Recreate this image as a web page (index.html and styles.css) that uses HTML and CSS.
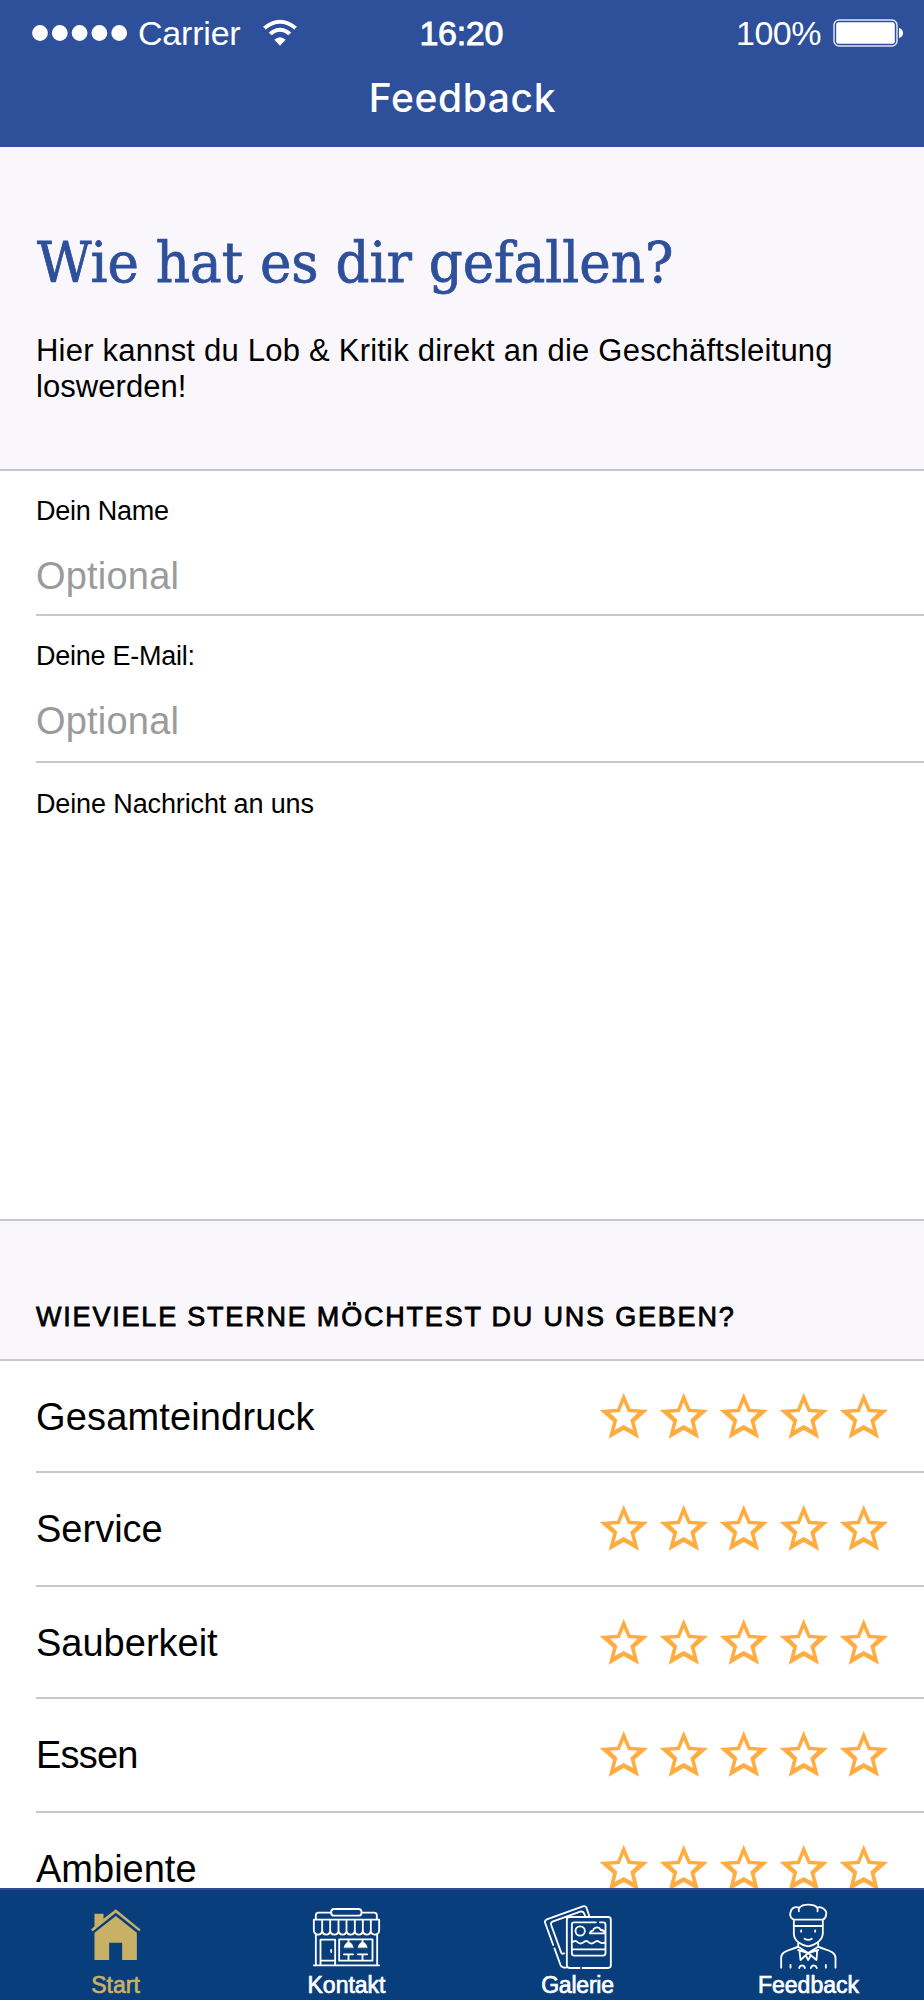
FILE: index.html
```html
<!DOCTYPE html>
<html lang="de">
<head>
<meta charset="utf-8">
<title>Feedback</title>
<link rel="stylesheet" href="styles.css">
</head>
<body>
<svg class="defs" aria-hidden="true">
  <symbol id="star" viewBox="412 578 150 144">
    <path fill-rule="evenodd" d="M486 580 506 628 559 632 519 667 532 718 486 692 441 718 454 667 414 632 467 628ZM486 609 474 638 445 640 467 661 459 692 486 677 514 692 506 661 528 640 499 638Z"/>
  </symbol>
</svg>
<header class="top">
  <div class="status">
    <div class="carrier">
      <svg class="dots" viewBox="0 0 96 16"><circle cx="8" cy="8" r="7.9"/><circle cx="27.8" cy="8" r="7.9"/><circle cx="47.6" cy="8" r="7.9"/><circle cx="67.4" cy="8" r="7.9"/><circle cx="87.2" cy="8" r="7.9"/></svg>
      <span class="carrier-name">Carrier</span>
      <svg class="wifi" viewBox="789 56 102 80"><path d="M789 79Q840 36 891 79L883 87Q840 53 797 87ZM806 96Q840 68 874 96L865 104Q840 84 815 104ZM823 118Q840 103 857 118L840 136Z"/></svg>
    </div>
    <span class="time">16:20</span>
    <div class="power">
      <span class="percent">100%</span>
      <svg class="battery" viewBox="0 0 70 28"><rect x="1" y="1" width="63" height="26" rx="5" fill="none" stroke="#dfe5f3" stroke-width="1.5"/><rect x="3.2" y="3.2" width="58.6" height="21.6" rx="2.5"/><path d="M66 9q4 1 4 5t-4 5z"/></svg>
    </div>
  </div>
  <h1 class="title">Feedback</h1>
</header>
<main class="content">
  <section class="intro">
    <h2 class="headline"><span>Wie hat es dir gefallen?</span></h2>
    <p class="lead">Hier kannst du Lob &amp; Kritik direkt an die Geschäftsleitung<br><span class="lead-end">loswerden!</span></p>
  </section>
  <section class="form">
    <div class="field name"><label>Dein Name</label><span class="placeholder">Optional</span></div>
    <div class="field mail"><label>Deine E-Mail:</label><span class="placeholder">Optional</span></div>
    <div class="field message"><label class="message-label">Deine Nachricht an uns</label></div>
  </section>
  <h3 class="section">WIEVIELE STERNE MÖCHTEST DU UNS GEBEN?</h3>
  <section class="ratings">
    <div class="rating"><span class="overall">Gesamteindruck</span><div class="stars"><svg><use href="#star"/></svg><svg><use href="#star"/></svg><svg><use href="#star"/></svg><svg><use href="#star"/></svg><svg><use href="#star"/></svg></div></div>
    <div class="rating tall"><span>Service</span><div class="stars"><svg><use href="#star"/></svg><svg><use href="#star"/></svg><svg><use href="#star"/></svg><svg><use href="#star"/></svg><svg><use href="#star"/></svg></div></div>
    <div class="rating"><span>Sauberkeit</span><div class="stars"><svg><use href="#star"/></svg><svg><use href="#star"/></svg><svg><use href="#star"/></svg><svg><use href="#star"/></svg><svg><use href="#star"/></svg></div></div>
    <div class="rating tall"><span class="food">Essen</span><div class="stars"><svg><use href="#star"/></svg><svg><use href="#star"/></svg><svg><use href="#star"/></svg><svg><use href="#star"/></svg><svg><use href="#star"/></svg></div></div>
    <div class="rating last"><span>Ambiente</span><div class="stars"><svg><use href="#star"/></svg><svg><use href="#star"/></svg><svg><use href="#star"/></svg><svg><use href="#star"/></svg><svg><use href="#star"/></svg></div></div>
  </section>
</main>
<nav class="tabs">
  <a class="tab active">
    <svg viewBox="2.5 60 210 210"><path fill="currentColor" d="M43 101H70V116L107 88 182 149 177 154 107 98 38 154 32 149 43 139ZM107 108 170 158V240H126V188H87V240H43V158Z"/></svg>
    <span>Start</span>
  </a>
  <a class="tab">
    <svg viewBox="66.5 60 210 210" fill="none" stroke="currentColor" stroke-width="5.5" stroke-linejoin="round" stroke-linecap="round"><rect x="124" y="87" width="91" height="20" rx="9"/><path d="M78 118V106Q78 98 86 98H122M217 98H253Q261 98 261 106V118M72 119H268V152Q266 164 255 164 243 162 243 152 242 164 231 164 220 163 219 152 218 164 207 164 195 163 195 152 194 164 182 164 171 163 170 152 169 164 158 164 147 163 146 152 145 164 133 164 122 163 121 152 120 164 109 164 98 163 97 152 96 164 84 164 73 162 72 152ZM97 120V152M121 120V152M146 120V152M170 120V152M195 120V152M219 120V152M243 120V152M78 166V253M262 166V253M72 256H268M92 253V179H136V253M92 242H136M124 210V216M148 178H248V242H148ZM176 180V186M218 180V186M204 223H232M162 223H190M176 224V240M218 224V240"/><path fill="currentColor" stroke-width="2" d="M163 202Q166 188 176 187 187 188 190 202ZM205 202Q208 188 218 187 229 188 232 202Z"/></svg>
    <span>Kontakt</span>
  </a>
  <a class="tab">
    <svg viewBox="68.5 60 210 210" fill="none" stroke="currentColor" stroke-width="5.5" stroke-linejoin="round" stroke-linecap="round"><path d="M99 195 75 129Q72 122 80 118L188 79Q196 77 199 83L207 107M103 205 121 255Q125 265 139 262M132 220 128 221Q124 222 122 215L93 135Q91 128 97 125L180 95Q188 93 191 99L195 108M178 264H148Q140 264 140 256V119Q140 111 148 111H264Q272 111 272 119V256Q272 264 264 264H187M227 127H162Q155 127 155 134V219Q155 227 162 227H248Q256 227 256 219V134Q256 127 249 127H239M156 187Q165 179 173 187 181 194 190 187 198 179 206 187 214 194 223 187 231 179 239 187 247 192 255 187M156 208H255M209 160H254Q251 149 242 150 237 140 227 143 220 145 218 152 212 152 209 160Z"/><circle cx="180" cy="153" r="14"/></svg>
    <span class="gallery">Galerie</span>
  </a>
  <a class="tab">
    <svg viewBox="102.5 60 210 210" fill="none" stroke="currentColor" stroke-width="5.5" stroke-linejoin="round" stroke-linecap="round"><path d="M162 119Q148 113 152 97C156 79 170 80 179 83C188 71 222 71 232 83C246 77 262 92 259 103Q258 115 249 119M179 83Q175 88 177 94M232 83Q235 88 233 94M162 119H249V160C248 184 222 196 205 199 185 196 163 184 162 161ZM163 138H248M184 151V155M226 151V155M194 176Q205 183 216 176M124 263V233C123 212 156 210 175 200V189M287 263V233C287 212 254 210 235 200V189M175 200 205 219 235 200M175 210 205 219 182 240 179 213M235 210 205 219 230 240 232 213M198 226 205 240 213 226M152 255V263M258 255V263M178 264Q180 256 187 256 194 257 195 264M213 264Q215 256 222 256 229 257 231 264"/></svg>
    <span>Feedback</span>
  </a>
</nav>
</body>
</html>
```
FILE: styles.css
```css
* { box-sizing: border-box; }
body { margin: 0; height: 2000px; display: flex; flex-direction: column; overflow: hidden; background: #fff; color: #000; font-family: "Liberation Sans", Arial, sans-serif; }
h1, h2, h3, p { margin: 0; font-weight: 400; }
.defs { position: absolute; width: 0; height: 0; }

.top { flex: none; height: 147px; background: #2e509b; color: #fff; }
.status { display: grid; grid-template-columns: 1fr auto 1fr; height: 67px; padding: 0 21px 0 32px; font-size: 34px; line-height: 67px; }
.status svg { fill: #fff; display: block; }
.carrier { display: flex; }
.dots { width: 96px; height: 16px; margin-top: 25px; }
.carrier-name { width: 124px; padding-left: 10px; letter-spacing: -0.2px; }
.wifi { width: 34px; height: 27px; margin: 19px 0 0 11px; }
.time { width: 86px; margin-left: -10px; letter-spacing: -0.3px; -webkit-text-stroke: 0.9px #fff; white-space: nowrap; }
.power { display: flex; justify-content: flex-end; }
.percent { margin-right: 12px; letter-spacing: -0.5px; }
.battery { width: 70px; height: 28px; margin-top: 19px; }
.title { text-align: center; font: 500 39px/56px Inter, sans-serif; letter-spacing: 0.6px; padding: 3px 0 0 1px; }

.content { flex: 1; min-height: 0; overflow: hidden; }
.intro { height: 324px; padding: 76px 0 0 36px; background: #f9f7fb; border-bottom: 2px solid #c8c7cc; }
.headline { height: 90px; font: 56px/80px "DejaVu Serif", serif; color: #2e509b; -webkit-text-stroke: 0.8px #2e509b; white-space: nowrap; }
.headline span { display: inline-block; padding-left: 1px; transform: scaleX(.948); transform-origin: left; }
.lead { font-size: 31px; line-height: 36px; padding-top: 20px; letter-spacing: 0.22px; white-space: nowrap; }
.lead-end { letter-spacing: 0.05px; }

.form { height: 750px; padding-left: 36px; border-bottom: 2px solid #c8c7cc; }
.field { display: flex; flex-direction: column; padding-top: 20px; font-size: 27px; line-height: 40px; }
.field label { height: 40px; letter-spacing: -0.25px; }
.field .message-label { letter-spacing: -0.13px; }
.name { height: 145px; border-bottom: 2px solid #c8c7cc; }
.mail { height: 147px; border-bottom: 2px solid #c8c7cc; }
.message { padding-top: 21px; }
.placeholder { font-size: 38px; line-height: 50px; margin-top: 20px; letter-spacing: 0.2px; color: #9b9b9b; }

.section { height: 140px; padding: 76px 0 0 36px; background: #f9f7fb; border-bottom: 2px solid #c8c7cc; font-size: 27px; line-height: 40px; letter-spacing: 1.8px; -webkit-text-stroke: 0.8px #000; white-space: nowrap; }
.rating { display: flex; justify-content: space-between; height: 112px; margin-left: 36px; border-bottom: 2px solid #c8c7cc; font-size: 38px; line-height: 112px; }
.rating.tall { height: 114px; }
.overall { letter-spacing: 0.15px; }
.food { letter-spacing: -0.8px; }
.stars { display: flex; gap: 9.8px; margin: 31px 35.5px 0 0; }
.stars svg { width: 50px; height: 48px; fill: #ffac41; }

.tabs { flex: none; display: grid; grid-template-columns: repeat(4, 1fr); height: 112px; border-top: 2px solid #2e4b94; background: #073e7b; color: #fff; }
.tab { display: flex; flex-direction: column; align-items: center; padding-top: 10px; font-size: 23px; line-height: 31px; -webkit-text-stroke: 0.7px currentColor; }
.tab svg { width: 70px; height: 70px; }
.tab.active { color: #c9b067; }
.gallery { letter-spacing: -0.2px; }
```
